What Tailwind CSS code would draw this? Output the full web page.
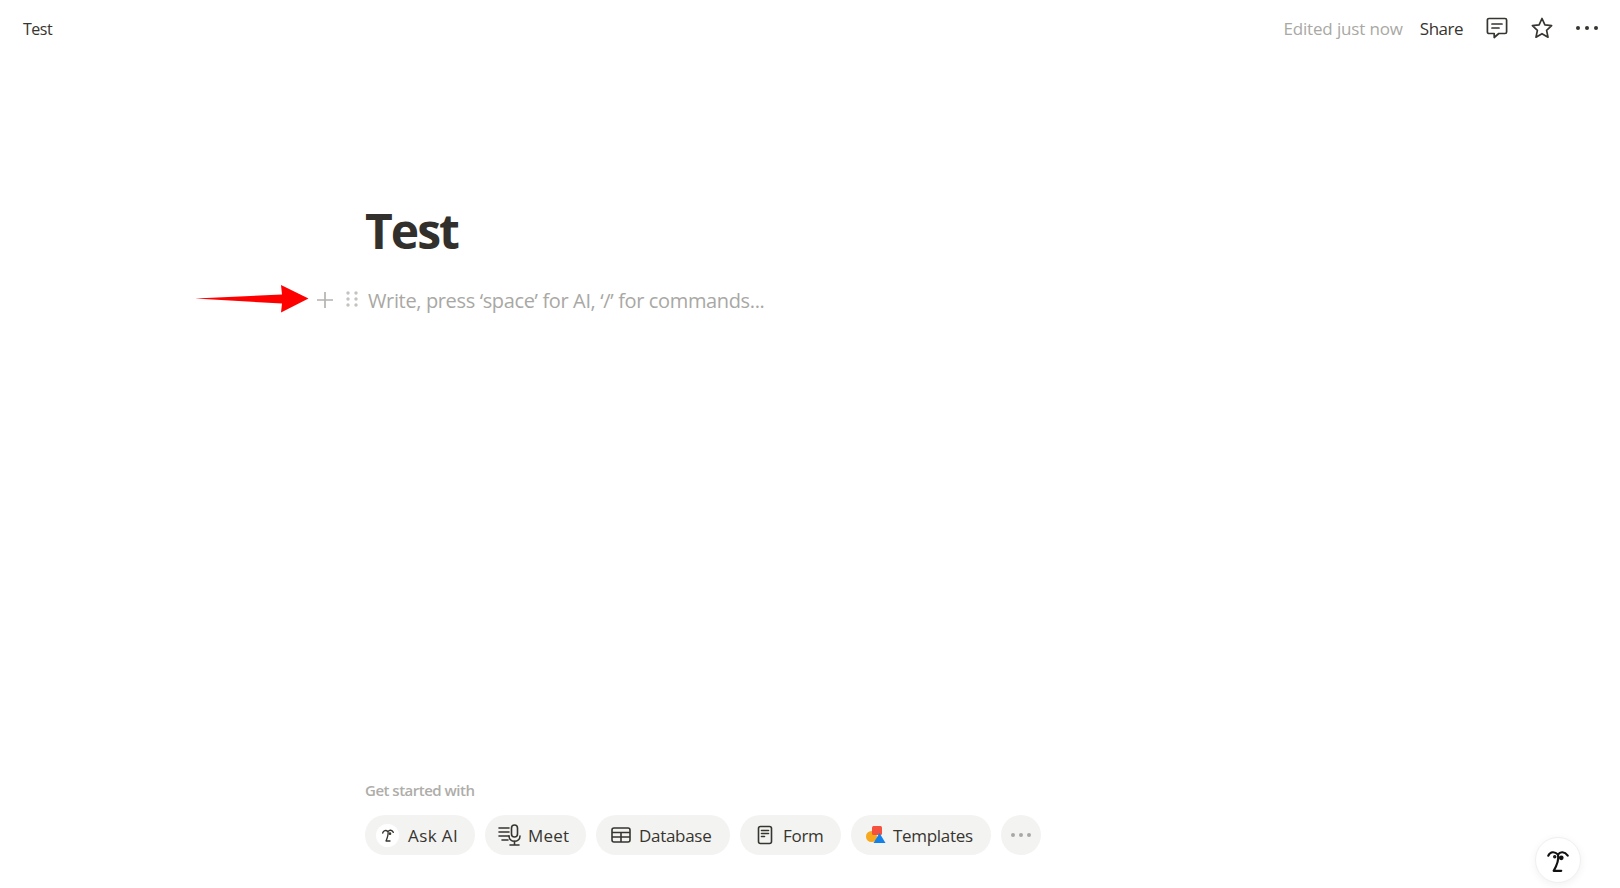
<!DOCTYPE html>
<html lang="en">
<head>
  <meta charset="UTF-8" />
  <title>Test</title>
  <script src="https://cdn.jsdelivr.net/npm/@tailwindcss/browser@4"></script>
</head>
<body class="bg-white h-screen overflow-hidden font-['Open_Sans',sans-serif] text-[#37352f]">
  <div class="relative h-[888px] flex flex-col">

    <!-- Top bar -->
    <header class="flex items-center justify-between h-[56px] pl-[23px] pr-[22px]">
      <span class="pt-px text-[16px] tracking-[-0.5px]">Test</span>
      <div class="flex items-center">
        <span class="pt-px text-[17px] tracking-[-0.15px] text-[#a9a8a4]">Edited just now</span>
        <span class="pt-px ml-[17px] text-[17px] tracking-[-0.5px]">Share</span>
        <svg class="ml-[22px]" width="24" height="24" viewBox="0 0 24 24" fill="none" stroke="#37352f" stroke-width="1.7" stroke-linejoin="round" stroke-linecap="round">
          <path d="M4 2.5h16a1.6 1.6 0 0 1 1.6 1.6v11.8a1.6 1.6 0 0 1-1.6 1.6h-6.2l-4.6 4v-4H4a1.6 1.6 0 0 1-1.6-1.6V4.100a1.600 1.600 0 0 1 1.600-1.600z"/>
          <path d="M7 8h10M7 12h7"/>
        </svg>
        <svg class="ml-[21px] -mt-[1px]" width="24" height="24" viewBox="0 0 24 24" fill="none" stroke="#37352f" stroke-width="1.7" stroke-linejoin="round">
          <path d="M12 2.500l2.900 6.300 6.700.8-5 4.700 1.400 6.900-6-3.500-6 3.500 1.400-6.900-5-4.700 6.700-.8z"/>
        </svg>
        <div class="ml-[22px] -mt-[1px] flex gap-[5px]">
          <span class="size-[4px] rounded-full bg-[#37352f]"></span>
          <span class="size-[4px] rounded-full bg-[#37352f]"></span>
          <span class="size-[4px] rounded-full bg-[#37352f]"></span>
        </div>
      </div>
    </header>

    <!-- Page title -->
    <h1 class="mt-[143px] ml-[365px] text-[48px] leading-[64px] font-bold tracking-[-2px] text-[#32302c]">Test</h1>

    <!-- Empty block with handles -->
    <div class="mt-[22px] ml-[195px] flex items-center h-[32px]">
      <svg class="-mt-[5px]" width="114" height="28" viewBox="0 0 114 28" fill="#fe0000">
        <path d="M0 13.500L87 9.500 86 0 113.500 13.500 86 27.500 87 18.500z"/>
      </svg>
      <svg class="ml-[7px] -mt-[3px]" width="18" height="18" viewBox="0 0 18 18" stroke="#b4b3af" stroke-width="1.700">
        <path d="M9 1v16M1 9h16"/>
      </svg>
      <svg class="ml-[11px] -mt-[5px]" width="14" height="18" viewBox="0 0 14 18" fill="#c4c3bf">
        <circle cx="3" cy="3" r="1.700"/><circle cx="11" cy="3" r="1.700"/>
        <circle cx="3" cy="9" r="1.700"/><circle cx="11" cy="9" r="1.700"/>
        <circle cx="3" cy="15" r="1.700"/><circle cx="11" cy="15" r="1.700"/>
      </svg>
      <span class="ml-[9px] text-[20px] tracking-[-0.36px] text-[#a9a8a4]">Write, press ‘space’ for AI, ‘/’ for commands...</span>
    </div>

    <!-- Get started -->
    <div class="mt-auto ml-[365px] pb-[33px]">
      <p class="text-[15px] leading-[20px] font-semibold tracking-[-0.5px] text-[#aeada9]">Get started with</p>
      <div class="mt-[15px] flex gap-[10px] text-[17px] font-medium tracking-[-0.3px]">
        <div class="flex items-center h-[40px] w-[110px] pl-[11px] rounded-full bg-[#f3f3f2]">
          <span class="flex items-center justify-center size-[23px] rounded-full bg-white">
            <svg width="16" height="16" viewBox="0 0 24 24" fill="none" stroke="#37352f" stroke-width="2" stroke-linecap="round" stroke-linejoin="round">
              <path d="M4 9c1-4 5-5 8-2 2-3 6-3 8 1M12 7c1 5-1 9-3 14h6"/>
              <circle cx="15" cy="10" r="1" fill="#37352f"/>
            </svg>
          </span>
          <span class="ml-[9px] pt-px tracking-[0.4px]">Ask AI</span>
        </div>
        <div class="flex items-center h-[40px] w-[101px] pl-[13px] rounded-full bg-[#f3f3f2]">
          <svg width="24" height="24" viewBox="0 0 24 24" fill="none" stroke="#37352f" stroke-width="1.600" stroke-linecap="round">
            <path d="M1 5h10M1 9h10M1 13h10M4 17h6"/>
            <rect x="13.500" y="2" width="6" height="12" rx="3"/>
            <path d="M11 13c0 7 11 7 11 0M16.500 18v4M12 22h9"/>
          </svg>
          <span class="ml-[6px] pt-px tracking-[0.2px]">Meet</span>
        </div>
        <div class="flex items-center h-[40px] w-[134px] pl-[15px] rounded-full bg-[#f3f3f2]">
          <svg width="20" height="20" viewBox="0 0 20 20" fill="none" stroke="#37352f" stroke-width="1.600">
            <rect x="1" y="3" width="18" height="14" rx="2"/>
            <path d="M1 7.500h18M1 12h18M10 7.500v9.500"/>
          </svg>
          <span class="ml-[8px] pt-px">Database</span>
        </div>
        <div class="flex items-center h-[40px] w-[101px] pl-[15px] rounded-full bg-[#f3f3f2]">
          <svg width="20" height="20" viewBox="0 0 20 20" fill="none" stroke="#37352f" stroke-width="1.600" stroke-linecap="round">
            <rect x="3.500" y="1.500" width="13" height="17" rx="2"/>
            <path d="M6.500 5.500h7M6.500 8.500h7M6.500 11.500h3"/>
          </svg>
          <span class="ml-[8px] pt-px">Form</span>
        </div>
        <div class="flex items-center h-[40px] w-[140px] pl-[14px] rounded-full bg-[#f3f3f2]">
          <svg width="22" height="20" viewBox="0 0 22 20">
            <circle cx="6.500" cy="11.500" r="5.500" fill="#f8a81c"/>
            <rect x="7" y="1" width="10" height="9" rx="1.500" fill="#f4513f"/>
            <path d="M14.500 8l6 10h-12z" fill="#1381e8"/>
          </svg>
          <span class="ml-[6px] pt-px">Templates</span>
        </div>
        <div class="flex items-center justify-center gap-[4px] size-[40px] rounded-full bg-[#f3f3f2]">
          <span class="size-[4px] rounded-full bg-[#a9a8a4]"></span>
          <span class="size-[4px] rounded-full bg-[#a9a8a4]"></span>
          <span class="size-[4px] rounded-full bg-[#a9a8a4]"></span>
        </div>
      </div>
    </div>

    <!-- Floating AI button -->
    <div class="absolute left-[1535px] top-[837px] flex items-center justify-center size-[46px] rounded-full bg-white border border-[#f0f0ef] shadow-[0_2px_8px_rgba(0,0,0,0.06)]">
      <svg width="26" height="26" viewBox="0 0 24 24" fill="none" stroke="#111" stroke-width="2" stroke-linecap="round" stroke-linejoin="round">
        <path d="M3 8c2-4 6-4 9-1 2-3 6-3 9 1M12 7c1 5-1 10-4 15h7"/>
        <circle cx="15" cy="10" r="1.200" fill="#111"/>
        <circle cx="9" cy="9" r="0.600" fill="#111"/>
      </svg>
    </div>
  </div>
</body>
</html>
